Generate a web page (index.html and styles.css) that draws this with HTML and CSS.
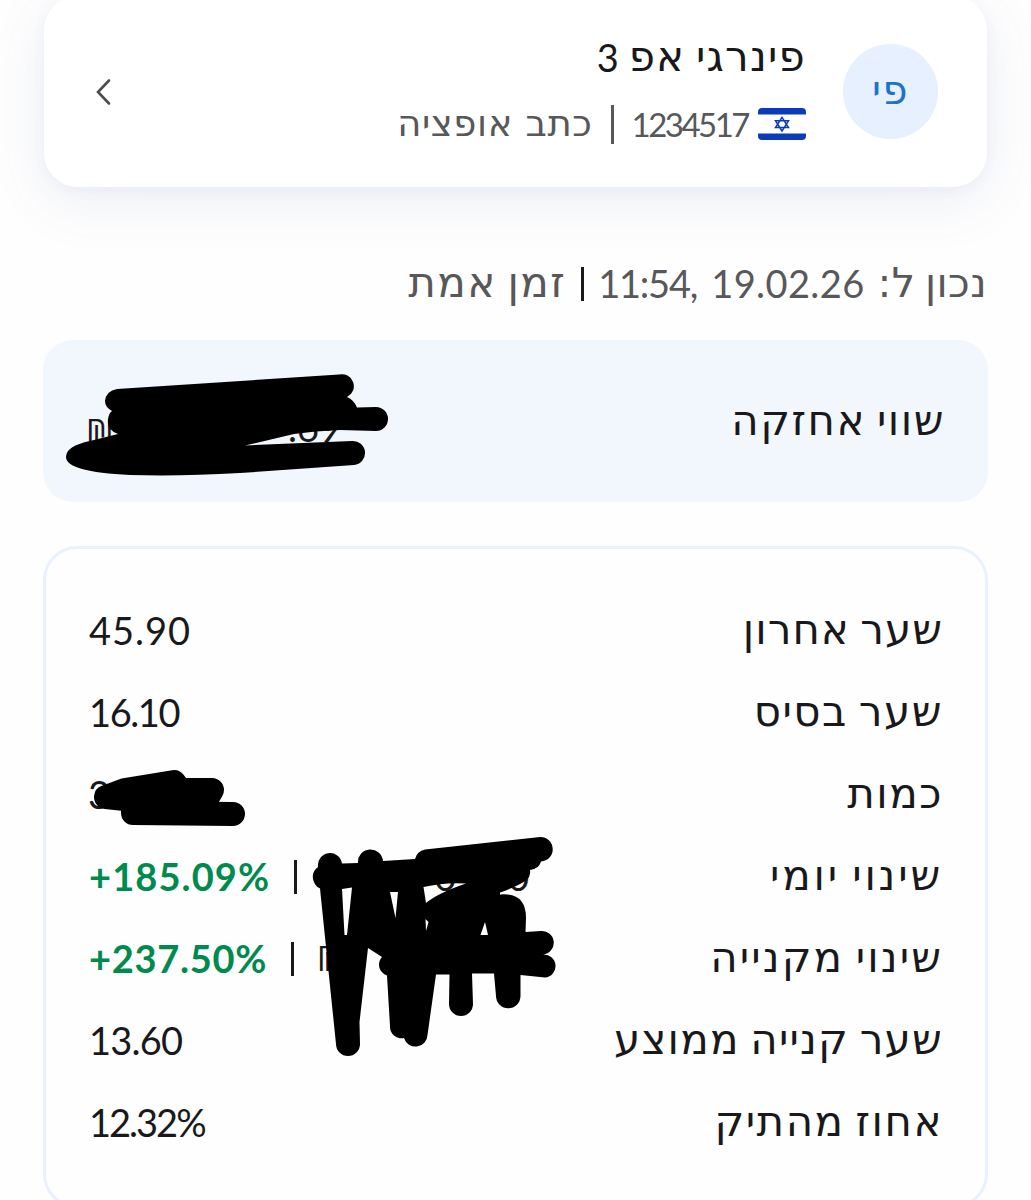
FILE: index.html
```html
<!DOCTYPE html>
<html lang="he" dir="rtl">
<head>
    <meta charset="UTF-8">
    <meta name="viewport" content="width=device-width, initial-scale=1.0">
    <title>פינרגי אפ 3</title>
    <link rel="stylesheet" href="styles.css">
</head>
<body>
    <div class="security-card">
        <div class="avatar"><span class="label">פי</span></div>
        <div class="security-info">
            <div class="security-name"><span class="label">פינרגי אפ</span><span class="name-num">3</span></div>
            <div class="security-meta">
                <svg class="flag" width="48" height="32" viewBox="0 0 48 32">
                    <rect width="48" height="32" rx="4" fill="#fff"/>
                    <path d="M0 6.500V4a4 4 0 0 1 4-4h40a4 4 0 0 1 4 4v2.500zM0 25.500v2.500a4 4 0 0 0 4 4h40a4 4 0 0 0 4-4v-2.500z" fill="#0b3bb8"/>
                    <path d="M24 9.3l6.500 10.200h-13zM24 23L17.500 12.800h13z" fill="none" stroke="#0b3bb8" stroke-width="1.5"/>
                </svg>
                <span class="security-id">1234517</span>
                <span class="divider"></span>
                <span class="security-type">כתב אופציה</span>
            </div>
        </div>
        <svg class="chevron" width="18" height="28" viewBox="0 0 18 28">
            <path d="M15 2.500L4 14l11 11.500" fill="none" stroke="#4c4c4e" stroke-width="2.600" stroke-linecap="round"/>
        </svg>
    </div>

    <div class="updated">
        <span class="label updated-label">נכון ל:</span>
        <span class="updated-date">19.02.26</span>
        <span class="updated-time" dir="ltr">11:54,</span>
        <span class="divider dark"></span>
        <span class="label updated-live">זמן אמת</span>
    </div>

    <div class="holding">
        <span class="label">שווי אחזקה</span>
        <span class="holding-value" dir="ltr"><span class="shekel">₪</span><span class="agorot">.69</span></span>
        <svg class="scribble" width="945" height="162" viewBox="43 340 945 162">
            <path d="M117 389L339 374.500A12 12 0 0 1 347 397Q354 400 357 407.500L376 407A12 12 0 0 1 376 431L340 430Q315 431 294 434L245 445.500L352 441A12 12 0 0 1 354 465L240 473Q180 476.500 130 475Q66 472 66 457Q66 446 90 441L118 434Q107 430 108 421Q108 414 112 411Q105 407 105 401Q106 391 117 389z"/>
        </svg>
    </div>

    <div class="details">
        <div class="row"><span class="label l-last">שער אחרון</span><span class="value v-last" dir="ltr">45.90</span></div>
        <div class="row"><span class="label">שער בסיס</span><span class="value v-base" dir="ltr">16.10</span></div>
        <div class="row"><span class="label">כמות</span><span class="value v-qty" dir="ltr">3</span></div>
        <div class="row">
            <span class="label l-daily">שינוי יומי</span>
            <span class="value" dir="ltr"><b class="gain">+185.09%</b><i class="divider dark"></i><span class="amount">0</span><span class="amount-end">0</span></span>
        </div>
        <div class="row">
            <span class="label l-buy">שינוי מקנייה</span>
            <span class="value" dir="ltr"><b class="gain tight">+237.50%</b><i class="divider dark"></i><span class="shekel">₪</span></span>
        </div>
        <div class="row"><span class="label l-avg">שער קנייה ממוצע</span><span class="value v-avg" dir="ltr">13.60</span></div>
        <div class="row"><span class="label">אחוז מהתיק</span><span class="value v-pct" dir="ltr">12.32%</span></div>
        <svg class="scribble" width="945" height="660" viewBox="43 546 945 660">
            <!-- quantity -->
            <g fill="#000" stroke="#000" stroke-width="24" stroke-linecap="round" stroke-linejoin="round">
                <path d="M106 797L125 790L174 782L180 790H212L205 802L134 800z"/>
                <path d="M133 802V813L233 814"/>
            </g>
            <!-- daily and purchase change -->
            <path fill-rule="evenodd" d="M324 889.500A12.500 12.500 0 0 1 318 867A12 12 0 0 1 342 863.500L358 863A12 12 0 0 1 383 861L415 859Q417 851 425 849.500L540 837A12 12 0 0 1 541 861.500Q539 869 530 870Q531 876 526 880.500Q518 886 500 892.500V894.500Q526 892 526 918L525.500 932L541 931A11 11 0 0 1 543 954.500A11 11 0 0 1 545 977.500L520.500 975V996A12 12 0 0 1 496 996L494 973.500H472L473 1004A12 12 0 0 1 449 1004L449.500 974.500H436L427.500 1035A12 12 0 0 1 404 1038A11.500 11.500 0 0 1 390 1026L387 975.500Q379 972 379 965Q379 960 382 957L368 948L359.500 1022L360 1044A12 12 0 0 1 336 1044L320 888.500z
                M342 889L352 887.500L347 935H344.500zM390 892H398L395.500 918zM423.500 887Q445 882 466 883.500Q438 893 426 903zM425.500 919L428.500 922L426 931zM485 922L480.500 935H488z"/>
        </svg>
    </div>
</body>
</html>
```
FILE: styles.css
```css
* {
    box-sizing: border-box;
}

body {
    margin: 0;
    padding: 0 43px;
    height: 1200px;
    overflow: hidden;
    background: #fefefe;
    color: #19191c;
    font-family: Lato, "DejaVu Sans", sans-serif;
    font-size: 38px;
    line-height: 44px;
    white-space: nowrap;
}

/* hebrew text */
.label {
    font-family: "DejaVu Sans", sans-serif;
    font-size: 42px;
    letter-spacing: 1.5px;
    word-spacing: -4px;
}

.security-card {
    display: flex;
    align-items: center;
    height: 191px;
    margin: -4px 1px 0;
    padding: 0 49px 0 50px;
    border-radius: 34px;
    background: #fff;
    box-shadow: 0 14px 56px rgba(80, 100, 170, 0.1), 0 3px 14px rgba(80, 90, 190, 0.05);
}

.avatar {
    display: flex;
    align-items: center;
    justify-content: center;
    width: 95px;
    height: 95px;
    border-radius: 50%;
    background: #e6f0fe;
    color: #1e73c8;
}

.avatar .label {
    padding-bottom: 4px;
    font-size: 40px;
}

.security-info {
    margin: 0 37px 0 auto;
}

.security-name {
    display: flex;
    align-items: center;
    gap: 10px;
    height: 64px;
    margin-top: -8px;
    padding-bottom: 9px;
}

.security-name .label {
    letter-spacing: 1.2px;
}

.security-meta {
    display: flex;
    align-items: center;
    height: 44px;
    margin-top: 8px;
    color: #58585a;
}

.flag {
    margin-left: 10px;
}

.security-id {
    font-size: 33px;
    letter-spacing: -2.5px;
}

.security-type {
    font-family: "DejaVu Sans", sans-serif;
    font-size: 37px;
    letter-spacing: 0.6px;
}

.divider {
    display: inline-block;
    width: 3px;
    height: 39px;
    margin: 2px 18px 0;
    background: #58585a;
}

.divider.dark {
    height: 34px;
    background: #19191c;
}

/* timestamp line */
.updated {
    display: flex;
    align-items: center;
    height: 44px;
    margin: 74px 1px 35px;
    color: #58585a;
}

.updated-label {
    font-size: 41px;
    letter-spacing: 0.4px;
}

.updated-live {
    letter-spacing: 1.4px;
}

.updated-date {
    margin-right: 13px;
    letter-spacing: 0.4px;
}

.updated-time {
    margin-right: 14px;
    letter-spacing: -1.2px;
}

.updated .divider {
    margin: 2px 14px 0 15px;
}

/* holding value */
.holding {
    position: relative;
    display: flex;
    align-items: center;
    justify-content: space-between;
    height: 162px;
    padding: 0 43px 0 43px;
    border-radius: 30px;
    background: #f2f7fe;
}

.holding-value {
    display: flex;
    justify-content: space-between;
    width: 255px;
    margin-top: 15px;
}

.shekel {
    font-family: "Open Sans", sans-serif;
    font-size: 35px;
}

.holding .shekel {
    padding-top: 4px;
}

.scribble {
    position: absolute;
    top: 0;
    left: 0;
}

/* details list */
.details {
    position: relative;
    height: 662px;
    margin-top: 44px;
    padding: 40px 42px 0 43px;
    border: 3px solid #e8f1fd;
    border-radius: 34px;
}

.details .scribble {
    top: -3px;
    left: -3px;
}

.row {
    display: flex;
    align-items: center;
    justify-content: space-between;
    height: 82px;
}

.l-last {
    letter-spacing: 1px;
}

.l-daily {
    letter-spacing: 2.8px;
}

.l-buy {
    letter-spacing: 2.1px;
}

.l-avg {
    letter-spacing: 1.2px;
}

.value {
    display: flex;
    align-items: center;
}

.v-last {
    letter-spacing: 1px;
}

.v-base {
    letter-spacing: -1.4px;
}

.v-qty {
    margin-left: -1px;
}

.v-avg {
    letter-spacing: -0.8px;
}

.v-pct {
    letter-spacing: -2px;
}

.gain {
    color: #008a4e;
    letter-spacing: 1.1px;
}

.gain.tight {
    letter-spacing: 0.7px;
}

.row .divider {
    margin: 2px 23px 0 24px;
}

.amount {
    margin-left: 114px;
}

.amount-end {
    margin-left: 51px;
}
```
